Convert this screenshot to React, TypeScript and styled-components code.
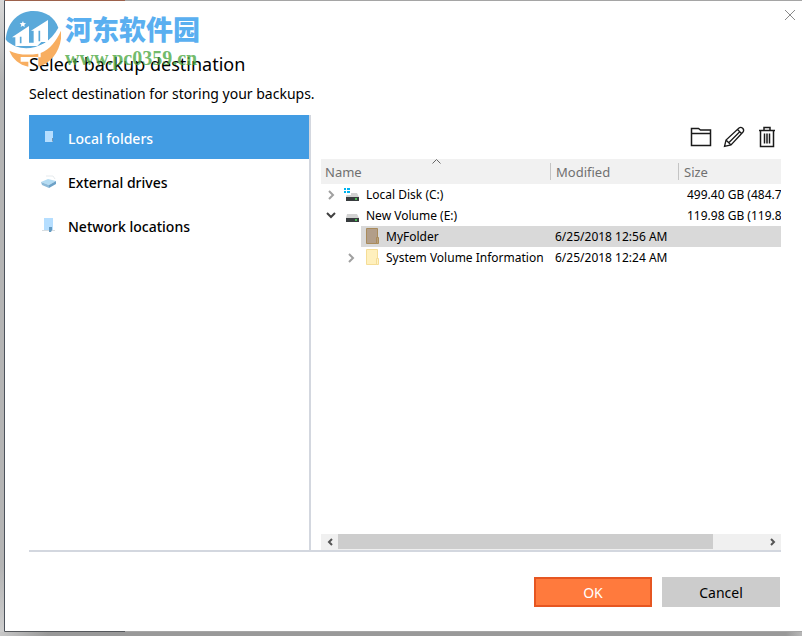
import React, { useState } from "react";
import styled, { createGlobalStyle, css } from "styled-components";

const GlobalStyle = createGlobalStyle`
  * { box-sizing: border-box; }
  body {
    margin: 0;
    background: #b4b4b4;
    color: #000;
    font-family: "Noto Sans", "Open Sans", sans-serif;
    font-size: 13px;
  }
  button { font: inherit; padding: 0; border: 0; background: none; cursor: pointer; }
`;

const Desktop = styled.div`
  display: flex;
  height: 100vh;
  min-height: 420px;
  padding: 0 0 4px 4px;
  background:
    linear-gradient(90deg, #c8c8c8, #999 48px, #999 calc(100% - 16px), #b8b8b8) bottom / 100% 4px no-repeat,
    linear-gradient(#d8d8d8, #b4b4b4 80px, #b4b4b4 calc(100% - 70px), #cfcfcf);
`;

const Dialog = styled.main`
  position: relative;
  flex: 1;
  min-width: 0;
  display: flex;
  flex-direction: column;
  padding: 50px 21px 24px 24px;
  border: solid transparent;
  border-width: 1px 0 1px 1px;
  border-left-color: #4c525b;
  background:
    linear-gradient(#9c614b, #9c614b) left top / 121px 1px no-repeat border-box,
    linear-gradient(#55585c, #55585c) left bottom / 121px 1px no-repeat border-box,
    linear-gradient(#fff, #fff) padding-box,
    #a5a5a5 border-box;
`;

const CloseButton = styled.button`
  position: absolute;
  top: 8px;
  right: 6px;
  width: 12px;
  height: 12px;
  display: flex;
`;

const Watermark = styled.div`
  position: absolute;
  top: 9px;
  left: 0;
  display: flex;
  pointer-events: none;
`;

const WatermarkText = styled.div`
  display: flex;
  flex-direction: column;
  padding-left: 4px;
`;

const WatermarkName = styled.span`
  color: #5aaff0;
  font: 900 27px/38px "Noto Sans CJK SC", sans-serif;
`;

const WatermarkSite = styled.span`
  color: rgba(76, 168, 66, 0.8);
  font: bold 20px/20px "Liberation Serif", serif;
`;

const Title = styled.h1`
  margin: 0;
  font-size: 18px;
  line-height: 26px;
  font-weight: 400;
`;

const Subtitle = styled.p`
  margin: 6px 0 10px;
  font-size: 14px;
  line-height: 22px;
`;

const Content = styled.div`
  flex: 1;
  min-height: 0;
  display: flex;
  border-bottom: 2px solid #d3d7df;
`;

const Sidebar = styled.nav`
  flex: 0 0 282px;
  border-right: 2px solid #d3d7df;
`;

const SidebarItem = styled.button<{ $active: boolean }>`
  display: flex;
  align-items: center;
  gap: 12px;
  width: 100%;
  height: 44px;
  padding: 2px 12px 0;
  font-size: 14px;
  font-weight: 500;
  text-align: left;
  color: ${(p) => (p.$active ? "#fff" : "#000")};
  background: ${(p) => (p.$active ? "#429ce3" : "transparent")};
`;

const Browser = styled.section`
  flex: 1;
  min-width: 0;
  display: flex;
  flex-direction: column;
  padding-left: 10px;
`;

const Toolbar = styled.div`
  display: flex;
  justify-content: flex-end;
  align-items: center;
  gap: 9px;
  height: 44px;
  padding-right: 2px;
`;

const ToolButton = styled.button`
  display: flex;
  width: 24px;
  height: 24px;
`;

const TableArea = styled.div`
  flex: 1;
  min-height: 0;
  overflow: hidden;
`;

const FileTable = styled.table`
  width: 100%;
  table-layout: fixed;
  border-collapse: collapse;
  white-space: nowrap;
`;

const HeadCell = styled.th<{ $width?: number; $sorted?: boolean }>`
  position: relative;
  width: ${(p) => (p.$width ? `${p.$width}px` : "auto")};
  height: 25px;
  padding: 1px 0 0 ${(p) => (p.$sorted ? 4 : 5)}px;
  background: #f1f1f1;
  color: #707070;
  font-weight: 400;
  text-align: left;
  &:not(:last-child)::after {
    content: "";
    position: absolute;
    top: 4px;
    right: 0;
    width: 1px;
    height: 17px;
    background: #c4c4c4;
  }
`;

const SortMark = styled.svg`
  position: absolute;
  top: 0;
  left: calc(50% - 4px);
`;

const selectedFill = css`background: #d9d9d9;`;

const Cell = styled.td<{ $selected?: boolean; $indent?: number }>`
  height: 21px;
  padding: 0 0 0 ${(p) => p.$indent ?? 0}px;
  font-size: 12px;
  ${(p) => p.$selected && selectedFill}
`;

const NameCell = styled.div<{ $depth: number }>`
  display: flex;
  align-items: center;
  height: 21px;
  padding-left: ${(p) => p.$depth * 20}px;
`;

const Expander = styled.button`
  display: flex;
  justify-content: center;
  align-items: center;
  flex: 0 0 20px;
  height: 21px;
`;

const Entry = styled.span<{ $selected: boolean }>`
  flex: 1;
  display: flex;
  align-items: center;
  gap: 4px;
  height: 21px;
  padding-left: 1px;
  svg { flex: none; }
  ${(p) => p.$selected && selectedFill}
`;

const ScrollBar = styled.div`
  display: flex;
  height: 16px;
  background: #f0f0f0;
`;

const ScrollButton = styled.button`
  display: flex;
  align-items: center;
  justify-content: center;
  flex: 0 0 17px;
`;

const ScrollTrack = styled.div`
  flex: 1;
`;

const ScrollThumb = styled.div`
  width: 88%;
  height: 15px;
  background: #cdcdcd;
`;

const Actions = styled.footer`
  display: flex;
  justify-content: flex-end;
  gap: 10px;
  padding: 25px 1px 0 0;
`;

const ActionButton = styled.button<{ $primary?: boolean }>`
  width: 118px;
  height: 30px;
  font-size: 14px;
  color: ${(p) => (p.$primary ? "#fff" : "#000")};
  background: ${(p) => (p.$primary ? "#ff7a3d" : "#ccc")};
  border: 2px solid ${(p) => (p.$primary ? "#e65621" : "#ccc")};
`;

const Logo = () => (
  <svg width="56" height="58" viewBox="15 30 168 174" aria-hidden="true">
    <path d="M17 118C22 62 60 33 100 33c38 0 64 20 75 50-20 38-60 66-100 66-28 0-48-10-58-31Z" fill="#5aa9da" />
    <path d="M36 112 87 78v50h14V92h-8l51-32v66h-20l-12 12H46v-26Z" fill="#fff" />
    <path d="M62 110v20M118 92v32" stroke="#5aa9da" strokeWidth="5" />
    <path d="m69 63 2 6 7 1-5 4 1 7-6-4-6 4 2-7-5-4 7-1Z" fill="#fff" />
    <path d="M17 120c48 44 118 26 166-34-10 62-92 100-160 68Z" fill="#fff" />
    <path d="M183 92c6 52-28 98-68 108v-28h7v-13c28-12 46-34 61-67Z" fill="#f8ae60" />
    <path d="M28 152c25 13 56 14 87 9v10H62v14h23v15c-27-6-47-22-57-48Z" fill="#f8ae60" />
  </svg>
);

type PlaceKind = "folder" | "drive" | "network";

const PlaceIcon = ({ kind }: { kind: PlaceKind }) => (
  <svg width="15" height="16" viewBox="0 0 15 16" aria-hidden="true">
    {kind === "folder" && (
      <>
        <path d="M4 1h8v11H4Z" fill="#b5deff" />
        <path d="M11 8h1v3l-1 1Z" fill="#7794ad" />
      </>
    )}
    {kind === "drive" && (
      <>
        <path d="M5 2h7l2 3" fill="none" stroke="#e6ebee" />
        <path d="m0 8 7-3 8 2-7 4Z" fill="#b4dcf3" />
        <path d="m0 8 8 3v3l-7-3Z" fill="#8dbad9" />
        <path d="m8 11 7-4v3l-7 4Z" fill="#6ca1c7" />
      </>
    )}
    {kind === "network" && (
      <>
        <path d="M1 12.500h13" stroke="#d7dde1" />
        <path d="M3 0h9v12H3Z" fill="#b5deff" />
        <path d="M8 9h3v3l-1 2H8Z" fill="#659bc2" />
      </>
    )}
  </svg>
);

type EntryKind = "system" | "disk" | "current" | "folder";

const EntryIcon = ({ kind }: { kind: EntryKind }) => {
  if (kind === "current" || kind === "folder") {
    const current = kind === "current";
    const edge = current ? "#a98b5b" : "#f5dd96";
    return (
      <svg width="20" height="17" viewBox="0 0 20 17" aria-hidden="true">
        <path d="M4.500.5h11v15h-11Z" fill={current ? "#b29e89" : "#fff0bd"} stroke={edge} />
        <path d="M14.500 9.500h2v6h-2Z" fill={current ? "#b9a17c" : "#fff3c9"} stroke={edge} />
      </svg>
    );
  }
  return (
    <svg width="20" height="16" viewBox="0 0 20 16" aria-hidden="true">
      <path d="M5 6h10l2 4H4Z" fill="#d2d2d2" />
      <path d="M4 10h13v4H4Z" fill="#383c3e" />
      <path d="M13 12h2" stroke="#4ce75e" strokeWidth="1.500" />
      {kind === "system" && (
        <>
          <path d="M1 0h8v8H1Z" fill="#fff" />
          <path d="M2 1h2v2H2Zm3 0h3v2H5ZM2 4h2v2H2Zm3 0h3v2H5Z" fill="#00b3f0" />
        </>
      )}
    </svg>
  );
};

const Chevron = ({ open }: { open: boolean }) => (
  <svg width="10" height="10" viewBox="0 0 10 10" fill="none" aria-hidden="true">
    {open ? (
      <path d="m1 2 4 4 4-4" stroke="#404040" strokeWidth="2" />
    ) : (
      <path d="m3 1 4 4-4 4" stroke="#a0a0a0" strokeWidth="2" />
    )}
  </svg>
);

const NewFolderIcon = () => (
  <svg width="24" height="24" viewBox="0 0 24 24" fill="none" stroke="#1a1a1a" strokeWidth="1.500" aria-hidden="true">
    <path d="M2.500 20.500v-17h7l2 1.500h10v15.500ZM2.500 8.500h19" />
  </svg>
);

const EditIcon = () => (
  <svg width="24" height="24" viewBox="0 0 24 24" fill="none" stroke="#1a1a1a" strokeWidth="1.300" aria-hidden="true">
    <path d="m2.500 21.500 1.500-6.500L17 3c2.500-2 6 1.500 4 4L9 20ZM4 15l5 5M15.500 4.500l4 4M7 17.500 18 6.500" />
  </svg>
);

const DeleteIcon = () => (
  <svg width="24" height="24" viewBox="0 0 24 24" fill="none" stroke="#1a1a1a" strokeWidth="1.500" aria-hidden="true">
    <path d="M4 5.500h16M9 5V2.500h6V5M5.500 6v15.500h13V6" />
    <path d="M9.500 8.500v10M12 8.500v10M14.500 8.500v10" />
  </svg>
);

const places: { label: string; kind: PlaceKind }[] = [
  { label: "Local folders", kind: "folder" },
  { label: "External drives", kind: "drive" },
  { label: "Network locations", kind: "network" },
];

interface Row {
  name: string;
  kind: EntryKind;
  depth: number;
  open?: boolean;
  modified?: string;
  size?: string;
}

const rows: Row[] = [
  { name: "Local Disk (C:)", kind: "system", depth: 0, open: false, size: "499.40 GB (484.7" },
  { name: "New Volume (E:)", kind: "disk", depth: 0, open: true, size: "119.98 GB (119.8" },
  { name: "MyFolder", kind: "current", depth: 1, modified: "6/25/2018 12:56 AM" },
  { name: "System Volume Information", kind: "folder", depth: 1, open: false, modified: "6/25/2018 12:24 AM" },
];

export default function App() {
  const [place, setPlace] = useState(places[0].label);
  const [selected, setSelected] = useState("MyFolder");

  return (
    <Desktop>
      <GlobalStyle />
      <Dialog>
        <Title>Select backup destination</Title>
        <Subtitle>Select destination for storing your backups.</Subtitle>
        <Content>
          <Sidebar aria-label="Destinations">
            {places.map(({ label, kind }) => (
              <SidebarItem key={label} $active={label === place} onClick={() => setPlace(label)}>
                <PlaceIcon kind={kind} />
                {label}
              </SidebarItem>
            ))}
          </Sidebar>
          <Browser>
            <Toolbar>
              <ToolButton aria-label="New folder"><NewFolderIcon /></ToolButton>
              <ToolButton aria-label="Rename"><EditIcon /></ToolButton>
              <ToolButton aria-label="Delete"><DeleteIcon /></ToolButton>
            </Toolbar>
            <TableArea>
              <FileTable>
                <thead>
                  <tr>
                    <HeadCell $width={230} $sorted>
                      Name
                      <SortMark width="9" height="6" viewBox="0 0 9 6" fill="none" stroke="#666" aria-hidden="true">
                        <path d="m.5 4.500 4-4 4 4" />
                      </SortMark>
                    </HeadCell>
                    <HeadCell $width={128}>Modified</HeadCell>
                    <HeadCell>Size</HeadCell>
                  </tr>
                </thead>
                <tbody>
                  {rows.map((row) => {
                    const isSelected = row.name === selected;
                    return (
                      <tr key={row.name} onClick={() => setSelected(row.name)}>
                        <Cell>
                          <NameCell $depth={row.depth}>
                            <Expander aria-label={`Expand ${row.name}`} disabled={row.open === undefined}>
                              {row.open !== undefined && <Chevron open={row.open} />}
                            </Expander>
                            <Entry $selected={isSelected}>
                              <EntryIcon kind={row.kind} />
                              {row.name}
                            </Entry>
                          </NameCell>
                        </Cell>
                        <Cell $selected={isSelected} $indent={4}>{row.modified}</Cell>
                        <Cell $selected={isSelected} $indent={8}>{row.size}</Cell>
                      </tr>
                    );
                  })}
                </tbody>
              </FileTable>
            </TableArea>
            <ScrollBar>
              <ScrollButton aria-label="Scroll left">
                <svg width="8" height="8" viewBox="0 0 8 8" fill="none"><path d="M6 1 3 4l3 3" stroke="#555" strokeWidth="2" /></svg>
              </ScrollButton>
              <ScrollTrack><ScrollThumb /></ScrollTrack>
              <ScrollButton aria-label="Scroll right">
                <svg width="8" height="8" viewBox="0 0 8 8" fill="none"><path d="m2 1 3 3-3 3" stroke="#555" strokeWidth="2" /></svg>
              </ScrollButton>
            </ScrollBar>
          </Browser>
        </Content>
        <Actions>
          <ActionButton $primary>OK</ActionButton>
          <ActionButton>Cancel</ActionButton>
        </Actions>
        <CloseButton aria-label="Close">
          <svg width="12" height="12" viewBox="0 0 12 12" stroke="#8a8a8a"><path d="m1 1 10 10M11 1 1 11" /></svg>
        </CloseButton>
        <Watermark>
          <Logo />
          <WatermarkText>
            <WatermarkName lang="zh-CN">河东软件园</WatermarkName>
            <WatermarkSite>www.pc0359.cn</WatermarkSite>
          </WatermarkText>
        </Watermark>
      </Dialog>
    </Desktop>
  );
}
